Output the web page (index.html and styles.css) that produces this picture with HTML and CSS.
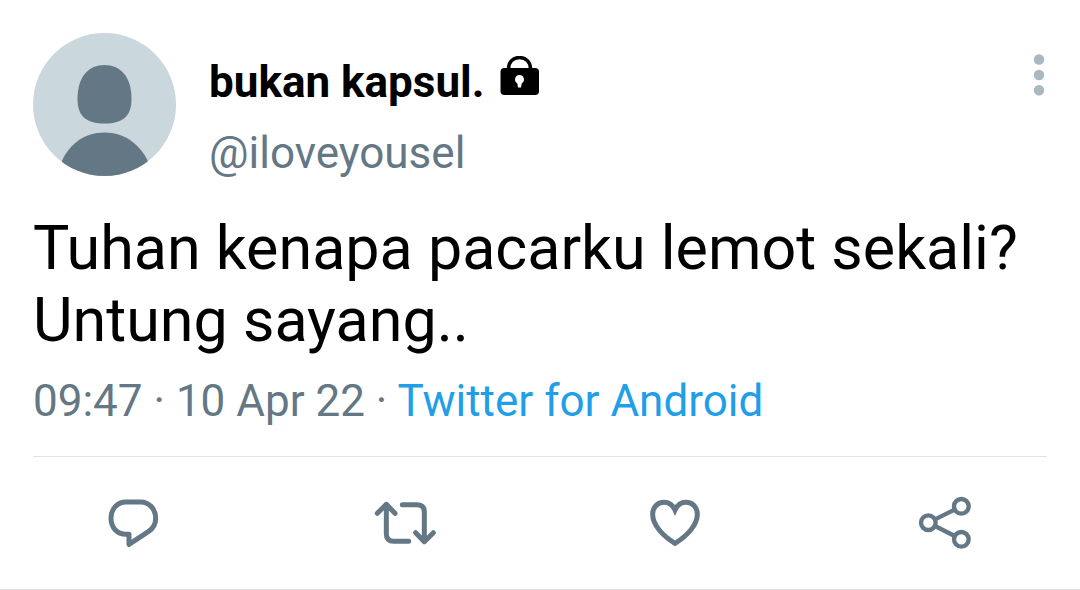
FILE: index.html
```html
<!DOCTYPE html>
<html lang="id">
<head>
<meta charset="utf-8">
<meta name="viewport" content="width=device-width, initial-scale=1">
<title>Tweet</title>
<link rel="stylesheet" href="styles.css">
</head>
<body>
<article class="tweet">
  <header class="header">
    <svg class="avatar" viewBox="0 0 143 143" aria-hidden="true">
      <defs><clipPath id="disc"><circle cx="71.5" cy="71.5" r="71.5"/></clipPath></defs>
      <g clip-path="url(#disc)">
        <rect width="143" height="143" fill="#cad7dc"/>
        <path fill="#647785" d="M71.500 32C87 32 98.500 43 98.500 66C98.500 83 90 90.500 71.500 90.500C53 90.500 44.500 83 44.500 66C44.500 43 56 32 71.500 32Z"/>
        <path fill="#647785" d="M27 133C34 112 51 99.500 71.500 99.500C92 99.500 109 112 117 133V143H27Z"/>
      </g>
    </svg>
    <div class="author">
      <div class="name">
        <span>bukan kapsul.</span>
        <svg class="lock" viewBox="0 0 40 40" role="img" aria-label="Akun terkunci">
          <path d="M8.500 15V13C8.500 6 13 1.500 19.500 1.500S30.500 6 30.500 13V15" fill="none" stroke="#000" stroke-width="3.500"/>
          <rect x="0.500" y="12" width="38.500" height="27" rx="4"/>
          <path fill="#fff" d="M19.500 19a4.500 4.500 0 0 1 2.200 8.400L21 31.500H18L17.300 27.400A4.500 4.500 0 0 1 19.500 19Z"/>
        </svg>
      </div>
      <div class="handle">@iloveyousel</div>
    </div>
    <button class="more" type="button" aria-label="Lainnya">
      <svg width="12" height="42" viewBox="0 0 12 42"><circle cx="6" cy="5.500" r="5.200"/><circle cx="6" cy="21" r="5.200"/><circle cx="6" cy="36.300" r="5.200"/></svg>
    </button>
  </header>
  <p class="text">Tuhan kenapa pacarku lemot sekali?<br>Untung sayang..</p>
  <div class="meta">09:47 · 10 Apr 22 · <a class="source" href="#">Twitter for Android</a></div>
  <div class="actions">
    <button class="action" type="button" aria-label="Balas">
      <svg class="icon reply" viewBox="0 0 240 225"><path d="M102 178V148H93C66 148 48 127 48 100C48 72 67 51 93 51H137C163 51 182 73 182 100C182 118 174 131 160 140Z"/></svg>
    </button>
    <button class="action" type="button" aria-label="Retweet">
      <svg class="icon" viewBox="0 0 240 225"><path d="M37 85L64 58L90 85M64 58V147Q64 169 86 169H131M112 59H156Q178 59 178 81V169M152 143L178 170L205 143"/></svg>
    </button>
    <button class="action" type="button" aria-label="Suka">
      <svg class="icon heart" viewBox="0 0 240 225"><path d="M120 75C113 60 101 52 87 52C67 52 53 67 53 88C53 120 83 152 120 175C157 152 187 120 187 88C187 67 173 52 153 52C139 52 127 60 120 75Z"/></svg>
    </button>
    <button class="action" type="button" aria-label="Bagikan">
      <svg class="icon share" viewBox="0 0 240 225"><circle cx="70" cy="113" r="22"/><circle cx="169" cy="64" r="22"/><circle cx="169" cy="163" r="22"/><path d="M90 103L149 74M90 123L149 153"/></svg>
    </button>
  </div>
</article>
</body>
</html>
```
FILE: styles.css
```css
* { box-sizing: border-box; }

body {
  margin: 0;
  background: #fff;
  color: #000;
  font-family: Roboto, "Liberation Sans", sans-serif;
}

button {
  padding: 0;
  border: 0;
  background: none;
  cursor: pointer;
}

svg { display: block; }

.tweet {
  padding-top: 33px;
  border-bottom: 1px solid #e1e8e8;
}

.header {
  display: flex;
  align-items: flex-start;
  padding: 0 33px;
}

.avatar {
  flex: none;
  width: 143px;
  height: 143px;
}

.author {
  flex: 1;
  margin-left: 33px;
  padding-top: 14px;
  font-size: 44px;
  line-height: 71px;
}

.name {
  display: flex;
  align-items: center;
  gap: 15px;
  height: 71px;
  font-weight: 700;
}

.lock {
  width: 40px;
  height: 40px;
  margin-bottom: 14px;
}

.handle { color: #647785; height: 58px; }

.more {
  margin-top: 21px;
  padding: 0 2px;
  fill: #a9b8c1;
}

.text {
  margin: 0;
  padding: 36px 33px 0;
  font-size: 61px;
  line-height: 72px;
}

.meta {
  margin: 0 33px;
  padding: 20px 0 30px;
  border-bottom: 1px solid #e4e4e4;
  color: #647785;
  font-size: 44px;
  line-height: 50px;
}

.source {
  color: #219ee8;
  text-decoration: none;
}

.actions {
  display: grid;
  grid-template-columns: repeat(4, 1fr);
  padding: 28px 0 29px;
}

.action {
  display: flex;
  justify-content: center;
}

.icon {
  width: 80px;
  height: 75px;
  fill: none;
  stroke: #647785;
  stroke-width: 15;
  stroke-linecap: round;
  stroke-linejoin: round;
}

.heart { stroke-linejoin: miter; }

.share { stroke-width: 13; }
```
